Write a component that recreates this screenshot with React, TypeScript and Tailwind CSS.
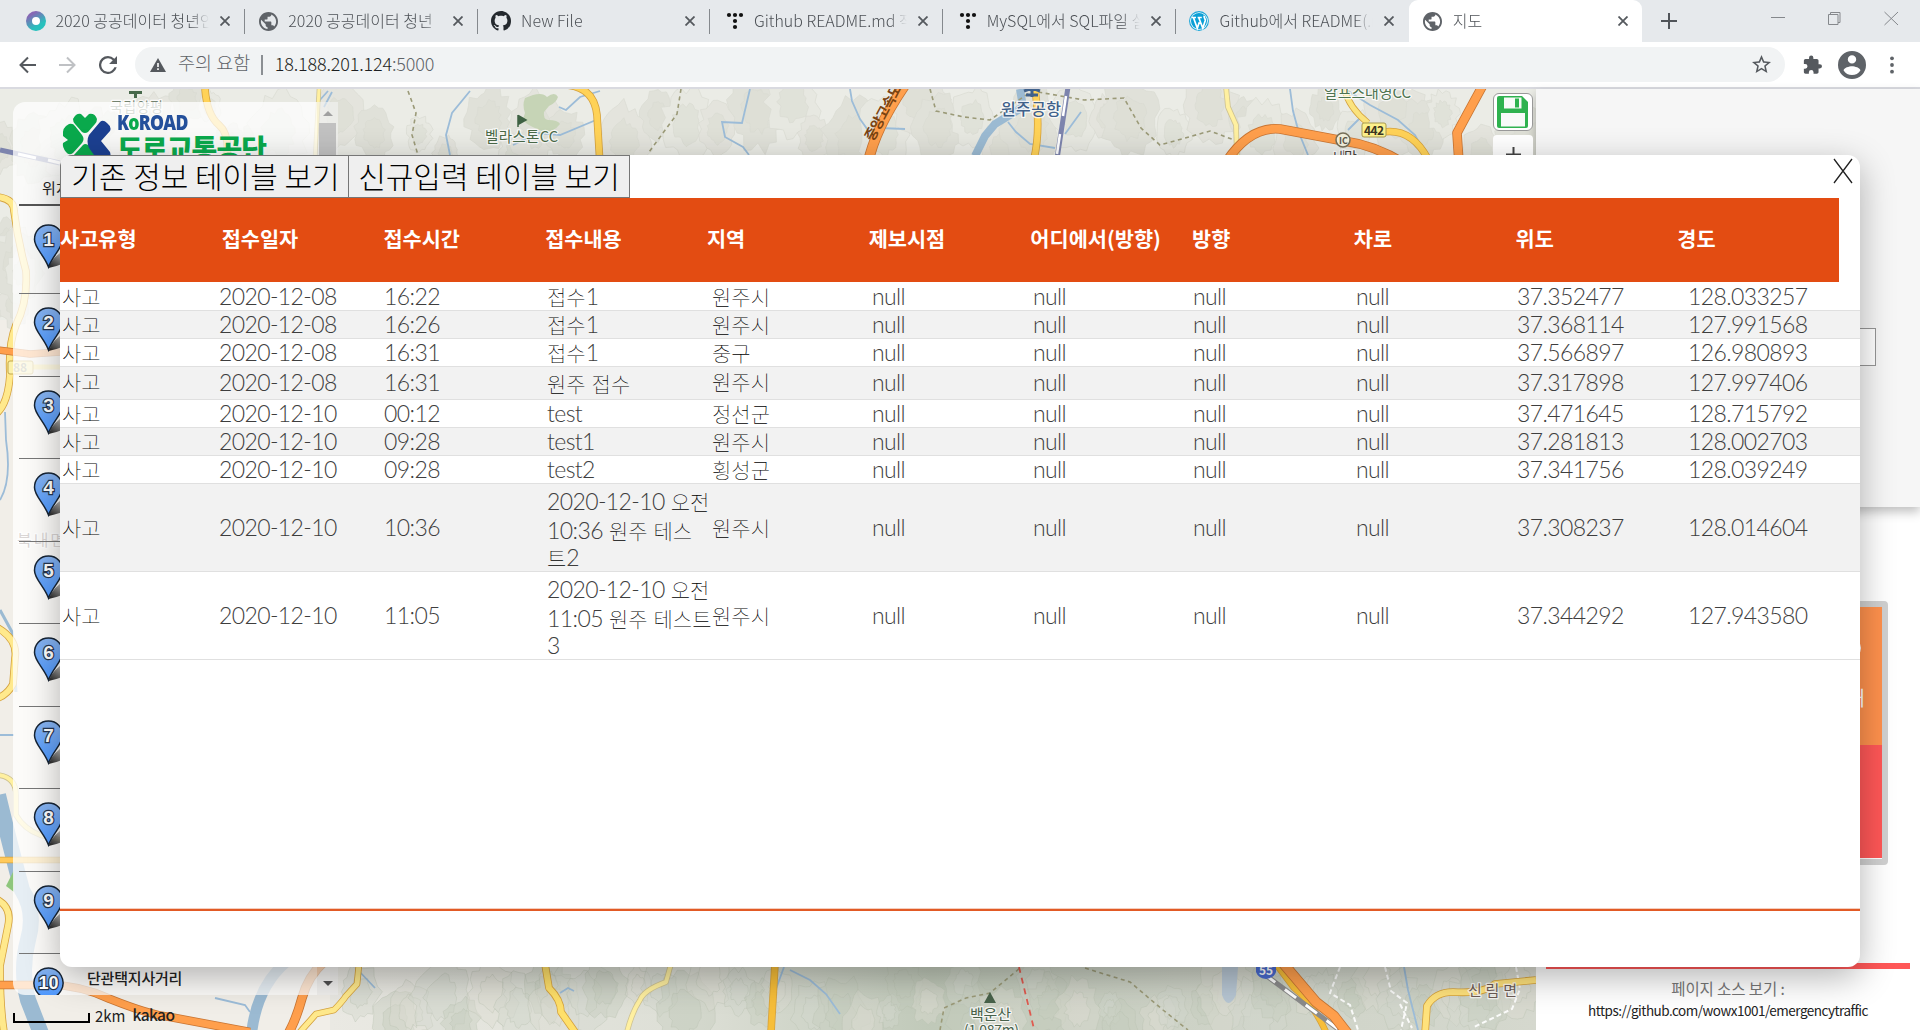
import { Fragment, type ReactNode } from "react";

const tabs = [
  { title: "2020 공공데이터 청년인턴", icon: "ring" },
  { title: "2020 공공데이터 청년", icon: "globe" },
  { title: "New File", icon: "github" },
  { title: "Github README.md 작성", icon: "dots" },
  { title: "MySQL에서 SQL파일 실행", icon: "dots" },
  { title: "Github에서 README(.md)", icon: "wordpress" },
];

const headers = ["사고유형", "접수일자", "접수시간", "접수내용", "지역", "제보시점", "어디에서(방향)", "방향", "차로", "위도", "경도"];

type Row = { date: string; time: string; note: string[]; area: string; lat: string; lng: string; size: "s" | "m" | "l" };

const rows: Row[] = [
  { date: "2020-12-08", time: "16:22", note: ["접수1"], area: "원주시", lat: "37.352477", lng: "128.033257", size: "s" },
  { date: "2020-12-08", time: "16:26", note: ["접수1"], area: "원주시", lat: "37.368114", lng: "127.991568", size: "s" },
  { date: "2020-12-08", time: "16:31", note: ["접수1"], area: "중구", lat: "37.566897", lng: "126.980893", size: "s" },
  { date: "2020-12-08", time: "16:31", note: ["원주 접수"], area: "원주시", lat: "37.317898", lng: "127.997406", size: "m" },
  { date: "2020-12-10", time: "00:12", note: ["test"], area: "정선군", lat: "37.471645", lng: "128.715792", size: "s" },
  { date: "2020-12-10", time: "09:28", note: ["test1"], area: "원주시", lat: "37.281813", lng: "128.002703", size: "s" },
  { date: "2020-12-10", time: "09:28", note: ["test2"], area: "횡성군", lat: "37.341756", lng: "128.039249", size: "s" },
  { date: "2020-12-10", time: "10:36", note: ["2020-12-10 오전", "10:36 원주 테스", "트2"], area: "원주시", lat: "37.308237", lng: "128.014604", size: "l" },
  { date: "2020-12-10", time: "11:05", note: ["2020-12-10 오전", "11:05 원주 테스트", "3"], area: "원주시", lat: "37.344292", lng: "127.943580", size: "l" },
];

const rowHeight = { s: "h-[28px]", m: "h-[33px]", l: "h-[88px]" };
const notePadding = { s: "", m: "pt-[4px]", l: "pt-[4px]" };

/* Latin runs are set a little larger than the Hangul beside them. */
function Mixed({ children }: { children: string }) {
  const parts = children.split(/([\x21-\x7e]+)/);
  return (
    <>
      {parts.map((p, i) =>
        i % 2 ? (
          <span key={i} className="text-[23px] font-light tracking-[-0.6px] text-[#3e3e3e]">{p}</span>
        ) : (
          <Fragment key={i}>{p}</Fragment>
        ),
      )}
    </>
  );
}

function Globe() {
  return (
    <svg className="h-[19px] w-[19px]" viewBox="2 2 20 20" fill="#5f6368">
      <path d="M12 2C6.48 2 2 6.48 2 12s4.48 10 10 10 10-4.48 10-10S17.52 2 12 2zm-1 17.93c-3.95-.49-7-3.85-7-7.93 0-.62.08-1.21.21-1.79L9 15v1c0 1.1.9 2 2 2v1.93zm6.9-2.54c-.26-.81-1-1.39-1.9-1.39h-1v-3c0-.55-.45-1-1-1H8v-2h2c.55 0 1-.45 1-1V7h2c1.1 0 2-.9 2-2v-.41c2.93 1.19 5 4.06 5 7.41 0 2.08-.8 3.97-2.1 5.39z" />
    </svg>
  );
}

function TabIcon({ kind }: { kind: string }) {
  if (kind === "globe") return <Globe />;
  if (kind === "ring")
    return (
      <svg className="h-[20px] w-[20px]" viewBox="0 0 20 20">
        <defs>
          <linearGradient id="ring" x1="0" y1="0" x2="0.6" y2="1">
            <stop offset="0.1" stopColor="#8668b5" />
            <stop offset="0.9" stopColor="#27c0bd" />
          </linearGradient>
        </defs>
        <circle cx="10" cy="10" r="7" fill="#fff" stroke="url(#ring)" strokeWidth="6" />
      </svg>
    );
  if (kind === "github")
    return (
      <svg className="h-[20px] w-[20px]" viewBox="0 0 16 16" fill="#24292e">
        <path d="M8 0C3.58 0 0 3.58 0 8c0 3.54 2.29 6.53 5.47 7.59.4.07.55-.17.55-.38 0-.19-.01-.82-.01-1.49-2.01.37-2.53-.49-2.69-.94-.09-.23-.48-.94-.82-1.13-.28-.15-.68-.52-.01-.53.63-.01 1.08.58 1.23.82.72 1.21 1.87.87 2.33.66.07-.52.28-.87.51-1.07-1.78-.2-3.64-.89-3.64-3.95 0-.87.31-1.59.82-2.15-.08-.2-.36-1.02.08-2.12 0 0 .67-.21 2.2.82.64-.18 1.32-.27 2-.27s1.36.09 2 .27c1.53-1.04 2.2-.82 2.2-.82.44 1.1.16 1.92.08 2.12.51.56.82 1.27.82 2.15 0 3.07-1.87 3.75-3.65 3.95.29.25.54.73.54 1.48 0 1.07-.01 1.93-.01 2.2 0 .21.15.46.55.38A8.01 8.01 0 0 0 16 8c0-4.42-3.58-8-8-8z" />
      </svg>
    );
  if (kind === "dots")
    return (
      <svg className="h-[20px] w-[20px]" viewBox="0 0 20 20" fill="#111">
        {[[5, 4], [11, 4], [17, 4], [11, 10], [11, 16]].map(([x, y]) => (
          <circle key={`${x}-${y}`} cx={x} cy={y} r="2.1" />
        ))}
      </svg>
    );
  return (
    <svg className="h-[20px] w-[20px]" viewBox="0 0 20 20">
      <circle cx="10" cy="10" r="9.4" fill="#fff" stroke="#1aa5d8" strokeWidth="1.1" />
      <circle cx="10" cy="10" r="8" fill="#0a9fd6" />
      <path d="M3 6.5h4M4.5 6.7l3.8 10.5 2-6M8.6 6.5h4.2M9.8 6.7l4 10.5 2.4-7.5c.5-2-1.7-3-1-5" fill="none" stroke="#fff" strokeWidth="1.7" />
    </svg>
  );
}

function CloseGlyph() {
  return (
    <svg className="h-[10px] w-[10px]" viewBox="0 0 10 10" stroke="#55595e" strokeWidth="1.8">
      <path d="M0.5 0.5l9 9M9.5 0.5l-9 9" />
    </svg>
  );
}

function TabBody({ icon, title }: { icon: ReactNode; title: string }) {
  return (
    <>
      <span className="flex w-[20px] shrink-0 justify-center">{icon}</span>
      <span className="ml-[10px] h-[24px] w-[154px] overflow-hidden whitespace-nowrap text-[16px] font-light leading-[22px] text-[#4d5156] [mask-image:linear-gradient(to_right,#000_88%,transparent)]">
        {title}
      </span>
      <span className="ml-[11px]"><CloseGlyph /></span>
    </>
  );
}

function BrowserChrome() {
  return (
    <header className="flex h-[89px] flex-col border-b-2 border-[#d9dae0] bg-white">
      <div className="flex h-[42px] items-stretch bg-[#e6e9ec] pl-[12px]">
        {tabs.map((t, i) => (
          <div key={i} className="flex w-[232.8px] items-center pl-[13.5px]">
            <TabBody icon={<TabIcon kind={t.icon} />} title={t.title} />
            {i < 5 && <span className="ml-[14px] h-[25px] w-px bg-[#85898d]" />}
          </div>
        ))}
        <div className="flex w-[233px] items-center rounded-t-[9px] bg-white pl-[14px]">
          <TabBody icon={<Globe />} title="지도" />
        </div>
        <svg className="ml-[19px] mt-[13px] h-[16px] w-[16px]" viewBox="0 0 16 16" stroke="#505459" strokeWidth="2"><path d="M8 0v16M0 8h16" /></svg>
        <svg className="ml-[94px] mt-[10px] h-[16px] w-[128px]" viewBox="0 0 128 16" fill="none" stroke="#85888c" strokeWidth="1">
          <path d="M0 7.5h14M57.5 4.5h9.5v10h-9.5zM59.5 4.5v-2h9.5v10h-2M113.5 2l13.5 13M127 2l-13.5 13" />
        </svg>
      </div>
      <div className="flex h-[45px] items-center">
        <svg className="ml-[19px] h-[18px] w-[17px]" viewBox="0 0 17 18" fill="none" stroke="#55595e" strokeWidth="2"><path d="M17 9H2M9 1.5L1.5 9 9 16.5" /></svg>
        <svg className="ml-[23px] h-[18px] w-[17px]" viewBox="0 0 17 18" fill="none" stroke="#bfc1c4" strokeWidth="2"><path d="M0 9h15M8 1.5L15.5 9 8 16.5" /></svg>
        <svg className="ml-[23px] h-[18px] w-[18px]" viewBox="4 4 16 16" fill="#55595e"><path d="M17.65 6.35A7.96 7.96 0 0 0 12 4a8 8 0 1 0 7.73 10h-2.08A6 6 0 1 1 12 6c1.66 0 3.14.69 4.22 1.78L13 11h7V4z" /></svg>
        <div className="ml-[18px] flex h-[35px] w-[1650px] items-center rounded-full bg-[#f1f3f4] pl-[15px] pr-[14px] text-[18px] font-light">
          <svg className="h-[14px] w-[16px]" viewBox="0 0 16 14" fill="#55595e"><path d="M8 0l8 14H0z" /><path d="M7.2 5h1.6v4H7.2zM7.2 10.3h1.6v1.6H7.2z" fill="#fff" /></svg>
          <span className="-mt-[3px] ml-[12px] text-[18.5px] text-[#5f6368]">주의 요함</span>
          <span className="ml-[11px] h-[20px] w-[1.5px] bg-[#8b8f93]" />
          <span className="-mt-[2px] ml-[12px] text-[18px] tracking-[-0.15px] text-[#1d1f22]">18.188.201.124<span className="text-[#5f6368]">:5000</span></span>
          <svg className="ml-auto h-[19px] w-[19px]" viewBox="2 2 20 20" fill="#55595e"><path d="M22 9.24l-7.19-.62L12 2 9.19 8.63 2 9.24l5.46 4.73L5.82 21 12 17.27 18.18 21l-1.63-7.03L22 9.24zM12 15.4l-3.76 2.27 1-4.28-3.32-2.88 4.38-.38L12 6.1l1.71 4.04 4.38.38-3.32 2.88 1 4.28L12 15.4z" /></svg>
        </div>
        <svg className="ml-[18px] h-[20px] w-[19px]" viewBox="1 1 22 22" fill="#55595e"><path d="M20.5 11H19V7c0-1.1-.9-2-2-2h-4V3.5a2.5 2.5 0 0 0-5 0V5H4c-1.1 0-1.99.9-1.99 2v3.8H3.5a2.7 2.7 0 0 1 0 5.4H2V20c0 1.1.9 2 2 2h3.8v-1.5a2.7 2.7 0 0 1 5.4 0V22H17c1.1 0 2-.9 2-2v-4h1.5a2.5 2.5 0 0 0 0-5z" /></svg>
        <svg className="ml-[16px] h-[28px] w-[28px]" viewBox="2 2 20 20" fill="#5f6368"><path d="M12 2a10 10 0 1 0 0 20 10 10 0 0 0 0-20zm0 3a3 3 0 1 1 0 6 3 3 0 0 1 0-6zm0 14.2a7.2 7.2 0 0 1-6-3.22c.03-1.99 4-3.08 6-3.08s5.97 1.09 6 3.08a7.2 7.2 0 0 1-6 3.22z" /></svg>
        <svg className="ml-[24px] h-[18px] w-[4px]" viewBox="0 0 4 18" fill="#5f6368"><circle cx="2" cy="2.3" r="1.9" /><circle cx="2" cy="9" r="1.9" /><circle cx="2" cy="15.7" r="1.9" /></svg>
      </div>
    </header>
  );
}

/* Irregular relief contours, seeded so every render is identical. */
function reliefPatches(y0: number, y1: number, count: number, seed: number, x0: number, x1: number) {
  let s = seed;
  const rnd = () => ((s = (s * 16807) % 2147483647) / 2147483647);
  return Array.from({ length: count }, (_, i) => {
    const cx = x0 + (x1 - x0) * ((i + rnd() * 0.8) / count);
    const cy = y0 + (y1 - y0) * rnd();
    const r = 12 + rnd() * 20;
    const shape = Array.from({ length: 28 }, () => 0.76 + rnd() * 0.34);
    const ring = (k: number) =>
      shape
        .map((q, j) => {
          const a = (j / shape.length) * Math.PI * 2;
          return `${(cx + Math.cos(a) * q * r * k).toFixed(1)},${(cy + Math.sin(a) * q * r * k * 1.4).toFixed(1)}`;
        })
        .join(" ");
    return { outer: ring(1), inner: ring(0.55), tone: i % 3 };
  });
}

const topRelief = [...reliefPatches(92, 150, 12, 15, 0, 300), ...reliefPatches(95, 155, 38, 71, 340, 1535), ...reliefPatches(210, 310, 6, 5, 0, 26)];
const bottomRelief = reliefPatches(975, 1028, 48, 1234, 360, 1535);
const tones = ["#e4e4dd", "#e0e1d9", "#e7e8e1"];
const darkTones = ["#d3d6cc", "#c6cdbf", "#dbdcd3"];

function Road({ d, w = 6, color = "#ffd257", edge = "#d5a23e" }: { d: string; w?: number; color?: string; edge?: string }) {
  return (
    <g fill="none" strokeLinejoin="round">
      <path d={d} stroke={edge} strokeWidth={w + 1.6} />
      <path d={d} stroke={color} strokeWidth={w} />
    </g>
  );
}

function MapCanvas() {
  const orange = { color: "#ff9f4c", edge: "#c87533" };
  const pale = { color: "#fff0a0", edge: "#cfc392" };
  return (
    <svg className="block h-[941px] w-[1536px] font-['Noto_Sans_CJK_KR',sans-serif]" viewBox="0 89 1536 941">
      <defs>
        <linearGradient id="mount" x1="0" x2="1">
          <stop offset="0" stopColor="#eae9e3" />
          <stop offset="0.3" stopColor="#dddfd6" />
          <stop offset="0.5" stopColor="#c0c9b9" />
          <stop offset="0.7" stopColor="#cdd2c6" />
          <stop offset="1" stopColor="#d5d8ce" />
        </linearGradient>
      </defs>
      <rect y="89" width="1536" height="941" fill="#ebece6" />
      <rect y="320" width="62" height="710" fill="#f1eee8" />
      <rect y="960" width="330" height="70" fill="#f1eee8" />
      <rect x="330" y="960" width="1206" height="70" fill="url(#mount)" />
      {topRelief.map((p, i) => (
        <g key={i} fill={tones[p.tone]} stroke="#dadbd2" strokeWidth="0.7" strokeLinejoin="round">
          <polygon points={p.outer} />
          <polygon points={p.inner} fill="#dcddd4" fillOpacity="0.6" />
        </g>
      ))}
      {bottomRelief.map((p, i) => (
        <g key={i} fill={darkTones[p.tone]} fillOpacity="0.4" stroke="#b8c0b0" strokeOpacity="0.5" strokeWidth="0.7" strokeLinejoin="round">
          <polygon points={p.outer} />
          <polygon points={p.inner} />
        </g>
      ))}

      <path d="M525 98l8-3q10-3 14 2 8-6 11 0-2 6-9 9l-5 6q-1 7 4 8 10 0 12 4-6 8-16 8-10-4-15-7-8-4-4-12-3-8 0-15z" fill="#c6d4b6" />
      <g fill="none" stroke="#9cbcd8" strokeWidth="1.8">
        <path d="M600 91l-20 6-14 13-7-3M470 91l-18 22-6 22 4 20M596 120l-36 15-22-2-25 12M750 89l-8 34-20-1 3 15 18 10 6 8M850 89l2 12 8 18 10 14M880 128l25 1M1008 122l8 10 14 12 25 4M1081 112l-16 22M1290 89l3 22 6 22 9 22M1345 89l25 16 28 15 17 15 12 22M1348 130l14-14M328 91l-9 10M332 92l-8 15" />
        <path d="M0 500q12-20 6-60l-1-28M0 735h14M358 970l17 18M215 998l30 7 5 7M784 967l-8 22M790 970l20 10 16 14 14 20M560 993l8-5 6 3M1404 967l4 23 10 40" />
      </g>
      <g fill="none" stroke="#9bbad2">
        <path d="M1020 89l3 18-28 17-10 12-10 20" strokeWidth="8" />
        <path d="M286 962q-28 24-34 68" strokeWidth="11" />
        <path d="M-2 795q12 50 24 95 14 22 6 50-8 30 0 60l14 36" strokeWidth="16" />
        <path d="M0 610l12 22 4 60" strokeWidth="3" />
      </g>
      <path d="M1222 967h16l-2 28q-8 16-14 0z" fill="#b7c6d3" />
      <path d="M6 886l8-16v22z" fill="#8ec67c" />
      <g fill="none" stroke="#9b9a78" strokeWidth="1.6" strokeDasharray="4 3.5">
        <path d="M408 91l8 22-4 22 6 20M681 89l-4 25-28 38M930 89l6 22 28 6 26 3 42-29 52 9 40-2 17 30 19 17 50-14 32 12" />
        <path d="M940 1030l4-22 22-10 24-5 30-25M1085 968l45 14 33 28 25 20" />
      </g>
      <path d="M1019 967l15 62" stroke="#e05a4f" strokeWidth="1.8" strokeDasharray="6 5" />
      <g fill="none" stroke="#fff" strokeOpacity="0.9" strokeWidth="2" strokeDasharray="5 3">
        <path d="M1340 967l-10 26 20 12 8 25M1385 967l6 24 16 12-6 27M1516 967l4 22-8 20-38 18M1400 1004l12 24" />
      </g>

      <Road d="M205 89q2 26 14 36t7 40" />
      <Road d="M319 89l-4 70" w={3} {...pale} />
      <Road d="M566 85q28 2 31 30l3 50" w={6} />
      <Road d="M905 85q-30 44-37 78" w={9} {...orange} />
      <Road d="M1035 89q6 40-1 70" w={6} />
      <Road d="M1226 87l2 20 8 18 1 34" w={4} {...pale} />
      <Road d="M1344 87q4 20 24 36" w={5} color="#fbe37d" />
      <Road d="M1378 133q32-8 50 26" w={6} />
      <Road d="M1226 162q24-36 54-33l64 12q30 4 60 22" w={8} {...orange} />
      <Road d="M1483 85q-24 44-26 48l2 30" w={8} {...orange} />
      <path d="M0 150l60 13" stroke="#7d84ad" strokeWidth="5" />
      <path d="M18 154l18 4M48 160l12 3" stroke="#fff" strokeWidth="3" />
      <path d="M1068 87l-11 72" stroke="#7d84ad" strokeWidth="5" />
      <path d="M1066 96l-3 20M1060 134l-3 20" stroke="#fff" strokeWidth="2.5" />

      <Road d="M-2 197q16 2 16 14 4 30 12 60 2 30-10 54-8 20-6 50-2 28-13 38" w={6} color="#ffe98c" />
      <Road d="M-2 350l32 4 30-2" w={6} {...orange} />
      <path d="M18 367h42l20 8" stroke="#ffe98c" strokeWidth="5" fill="none" />
      <Road d="M-2 628q20 12 17 30l-2 26q-5 10-15 14" w={6} color="#ffe98c" />
      <Road d="M-2 775q18 2 18 20v20q8 14 24 20l24 6" w={4} {...pale} />
      <Road d="M-2 860h62" w={5} color="#ffc95a" />
      <Road d="M-2 900q14 8 10 26l-8 40q0 40 4 66" w={6} color="#ffe98c" />
      <rect x="8" y="361" width="25" height="13" rx="2" fill="#fbf0a9" stroke="#c1a64d" />
      <text x="13" y="372" fontSize="12" fontWeight="700" fill="#9c9a80">88</text>

      <Road d="M-2 985h52q30 0 60 14 40 16 60 18l80 15" w={7} {...orange} />
      <Road d="M288 1034q8-14 14-36t22-36" w={8} {...orange} />
      <Road d="M300 1032l16-18 18-4q8-8 12-14l11-12 2-20" w={5} color="#ffe98c" />
      <Road d="M545 964l4 24q12 12 12 24l14 20" w={6} color="#ffe06a" />
      <Road d="M671 964l-5 18q-22 8-26 18-8 12-13 32" w={4} {...pale} />
      <Road d="M775 964l-4 68" w={6} color="#f7be39" />
      <Road d="M1276 964l18 24q18 14 32 44" w={5} color="#f7be39" />
      <path d="M1264 974l78 58" stroke="#8b8b8b" strokeWidth="5" />
      <path d="M1264 974l78 58" stroke="#fff" strokeWidth="3" strokeDasharray="14 12" />
      <Road d="M1282 962l34 40 18 14 14 18" w={9} {...orange} />
      <Road d="M1425 1034l2-28q8-14 26-14 30 2 42-8l41-4" w={6} color="#ffe27c" />

      <path d="M1256 962h20v10q-2 6-10 7-8-1-10-7z" fill="#4a6bd0" />
      <text x="1259" y="975" fontSize="12" fontWeight="700" fill="#fff">55</text>
      <path d="M129 91h13v3h-5v4h-3v-4h-5z" fill="#48694b" />
      <path d="M518 115v12M519 116l7 4-7 4z" fill="#3f6143" stroke="#3f6143" strokeWidth="1.5" />
      <path d="M1026 95h12M1032 89v8M1024 91l8-3 8 3" stroke="#40618a" strokeWidth="3" fill="none" />
      <path d="M990 992l6 11h-12z" fill="#48624a" />
      <rect x="1362" y="123" width="24" height="14" rx="2" fill="#fdf08c" stroke="#a89a50" />
      <text x="1364" y="135" fontSize="12" fontWeight="700" fill="#3c3522" textLength="20">442</text>
      <circle cx="1343" cy="140" r="7" fill="#f3f0dc" stroke="#776f58" strokeWidth="1.5" />
      <text x="1339" y="144" fontSize="9" fontWeight="700" fill="#5d5546">IC</text>
      <g paintOrder="stroke" stroke="#fff" strokeWidth="2.5" strokeLinejoin="round" strokeOpacity="0.8">
        <text x="110" y="112" fontSize="14" fill="#73836f" textLength="53">국립양평</text>
        <text x="485" y="142" fontSize="14.5" fill="#4b6a48" textLength="73">벨라스톤CC</text>
        <text x="1001" y="115" fontSize="16" fontWeight="500" fill="#40618a" textLength="60">원주공항</text>
        <text x="1324" y="98" fontSize="15" fill="#4e7350" textLength="87">알프스대영CC</text>
        <text x="1333" y="162" fontSize="14" fill="#4a443b" textLength="24">내막</text>
        <text x="970" y="1020" fontSize="15" fill="#48624a" textLength="41">백운산</text>
        <text x="964" y="1035" fontSize="14" fill="#48624a" textLength="55">(1,087m)</text>
        <text x="1468" y="996" fontSize="15" fill="#6e5d56" textLength="49">신림면</text>
        <text x="17" y="546" fontSize="16" fill="#6d5d5a" textLength="48">북내면</text>
      </g>
      <text x="873" y="142" fontSize="14" fontWeight="700" fill="#7a4311" transform="rotate(-62 873 142)" textLength="74">중앙고속도로</text>
    </svg>
  );
}

function Pin({ n }: { n: number }) {
  const round = n === 10;
  return (
    <svg className="ml-[14px] block h-[46px] w-[50px] shrink-0" viewBox="0 0 50 46">
      <defs>
        <linearGradient id={`pin${n}`} x1="0" y1="0" x2="0" y2="1">
          <stop offset="0" stopColor="#89b5f2" />
          <stop offset="1" stopColor="#4b97ff" />
        </linearGradient>
        <linearGradient id={`sh${n}`} x1="0" y1="1" x2="1" y2="0">
          <stop offset="0" stopColor="#000" stopOpacity="0.9" />
          <stop offset="0.8" stopColor="#000" stopOpacity="0" />
        </linearGradient>
      </defs>
      {!round && <path d="M15.5 44q4-12 18-19l10-2-4 10q-8 8-24 11z" fill={`url(#sh${n})`} />}
      <path
        d={round ? "M15.5 1a14.5 15 0 1 0 .01 0z" : "M15.5 1C7 1 1.5 7.5 1.5 15.5 1.5 24 11 31 15.5 43 20 31 29.5 24 29.5 15.5 29.5 7.5 24 1 15.5 1z"}
        fill={`url(#pin${n})`} stroke="#172536" strokeWidth="1.5"
      />
      <text x="15.5" y="22" textAnchor="middle" fontSize={round ? 18 : 19} fontWeight="700" fill="#fff" stroke="#26364f" strokeWidth="2.4" paintOrder="stroke" className="font-['Liberation_Sans',sans-serif]">{n}</text>
    </svg>
  );
}

function Sidebar() {
  return (
    <aside className="absolute left-[13px] top-[102px] flex h-[893px] w-[325px] overflow-hidden rounded-l-[12px]">
      <div className="w-[304px] bg-white/75 pl-[6px]">
        <div className="h-[104px] border-b-2 border-[#555]">
          <div className="flex h-[74px] pl-[42px] pt-[11px]">
            <svg className="h-[54px] w-[50px]" viewBox="0 0 50 54">
              <g fill="#0aa94c">
                <path d="M12 6q3-6 8-5l4 4 4-4q6-1 8 5 0 3-2 5l-7 8q-3 2-6 0l-7-8q-2-2-2-5z" />
                <path d="M8 11q4-1 6 2l7 9q3 4 0 8l-9 10q-4 3-7-1-4-5-3-9l5-3-5-4q-1-9 6-12z" />
                <path d="M22 32q2-2 5 0l9 11v11H12V43z" />
              </g>
              <path d="M39 9q3-3 7 1 5 4 3 8l-9 10 9 11q2 7-3 11-5 2-8-1L28 35q-3-7 0-13z" fill="#1c4091" />
            </svg>
            <div className="ml-[6px] flex flex-col whitespace-nowrap">
              <span className="origin-left scale-x-[0.84] text-[21px] font-extrabold leading-[19px] tracking-[-0.9px] text-[#24509b] font-['Open_Sans',sans-serif]">K<span className="text-[#0aa94c]">o</span>ROAD</span>
              <span className="mt-px text-[28px] font-black leading-[30px] tracking-[-0.9px] text-[#0aa94c]">도로교통공단</span>
            </div>
          </div>
          <p className="pl-[23px] text-[15px] leading-[24px] text-[#222]">위치</p>
        </div>
        {Array.from({ length: 10 }, (_, i) => (
          <div key={i} className={`flex items-start ${i === 9 ? "pt-[13px]" : i === 0 ? "h-[88px] border-b border-[#777] pt-[18px]" : "h-[82.5px] border-b border-[#777] pt-[13px]"}`}>
            <Pin n={i + 1} />
            {i === 9 && <span className="-mt-px ml-[4px] whitespace-nowrap text-[15px] font-medium leading-[24px] tracking-[-0.2px] text-[#222]">단관택지사거리</span>}
          </div>
        ))}
      </div>
      <div className="flex w-[21px] flex-col items-center bg-[#f4f4f4]/60">
        <svg className="mt-[9px] h-[5px] w-[10px] shrink-0" viewBox="0 0 10 5" fill="#a0a0a0"><path d="M0 5l5-5 5 5z" /></svg>
        <span className="mt-[7px] h-[300px] w-[17px] bg-[#c1c1c1]" />
        <svg className="mb-[9px] mt-auto h-[5px] w-[10px] shrink-0" viewBox="0 0 10 5" fill="#505050"><path d="M0 0h10L5 5z" /></svg>
      </div>
    </aside>
  );
}

function RightPanel() {
  return (
    <section className="flex h-[941px] flex-1 flex-col bg-white">
      <div className="flex h-[418px] shrink-0 flex-col items-end bg-[#f6f6f6] pr-[44px] pt-[239px] shadow-[0_5px_10px_rgba(0,0,0,0.25)]">
        <div className="h-[38px] w-[280px] border border-[#969696] bg-white" />
      </div>
      <div className="ml-[120px] mt-[94px] h-[264px] w-[232px] shrink-0 rounded-[4px] border-6 border-[#d0d0d0] text-white">
        <div className="flex h-[138px] flex-col items-end bg-[#ff914d] pr-[17px] pt-[31px] text-[20px] leading-[24px]">
          <span className="mr-[4px] h-[20px] w-[20px] rounded-full border-2 border-white" />
          <span className="mt-[28px]">안내</span>
        </div>
        <div className="h-[113px] bg-[#ff5757]" />
      </div>
      <div className="ml-[10px] mt-[98px] h-[6px] w-[364px] shrink-0 bg-[#ff5757]" />
      <p className="pt-[7px] text-center text-[15.5px] leading-[24px] tracking-[-0.1px] text-[#777]">페이지 소스 보기 :</p>
      <p className="text-center text-[13.5px] leading-[20px] tracking-[-0.5px] text-[#222]">https://github.com/wowx1001/emergencytraffic</p>
    </section>
  );
}

function TableDialog() {
  return (
    <div role="dialog" className="absolute left-[60px] top-[155px] flex h-[812px] w-[1800px] flex-col overflow-hidden rounded-[12px] bg-white shadow-[0_10px_35px_rgba(0,0,0,0.3)]">
      <div className="flex h-[43px] shrink-0 text-[30px] font-light leading-[36px] text-black">
        <button className="w-[289px] whitespace-nowrap border border-[#767676] bg-[#efefef] pb-[3px] pl-[2px]">기존 정보 테이블 보기</button>
        <button className="-ml-px w-[282px] whitespace-nowrap border border-[#767676] bg-[#efefef] pb-[3px]">신규입력 테이블 보기</button>
        <svg className="ml-auto mr-[7px] mt-[3px] h-[26px] w-[20px]" viewBox="0 0 20 26" stroke="#222" strokeWidth="1.3"><path d="M1 1l18 24M19 1L1 25" /></svg>
      </div>
      <div className="grid h-[84px] w-[1779px] shrink-0 grid-cols-11 items-center bg-[#e34c12] pb-[3px] text-[20.8px] font-bold text-white">
        {headers.map((h) => <span key={h} className="whitespace-nowrap">{h}</span>)}
      </div>
      <div className="h-[626px] shrink-0 pt-px">
        {rows.map((r, i) => (
          <div
            key={i}
            className={`grid grid-cols-[157px_165px_163px_165px_160px_161px_160px_163px_161px_171px_1fr] items-center whitespace-nowrap border-b border-[#e0e0e0] pb-[4px] pl-[2px] font-['Lato','Noto_Sans_CJK_KR',sans-serif] text-[21px] font-thin leading-[26px] text-black ${rowHeight[r.size]} ${i % 2 ? "bg-[#f2f2f2]" : "bg-white"}`}
          >
            <span>사고</span>
            <span><Mixed>{r.date}</Mixed></span>
            <span><Mixed>{r.time}</Mixed></span>
            <span className={`flex flex-col ${notePadding[r.size]}`}>
              {r.note.map((n, k) => <span key={k} className={k === 1 ? "mt-[2px]" : ""}><Mixed>{n}</Mixed></span>)}
            </span>
            <span>{r.area}</span>
            {[0, 1, 2, 3].map((k) => <span key={k}><Mixed>null</Mixed></span>)}
            <span><Mixed>{r.lat}</Mixed></span>
            <span><Mixed>{r.lng}</Mixed></span>
          </div>
        ))}
      </div>
      <div className="h-[3px] shrink-0 border-b-2 border-t border-b-[#e25a25] border-t-[#f5cdbd]" />
    </div>
  );
}

export default function App() {
  return (
    <div className="relative h-[1030px] w-[1920px] overflow-hidden bg-white font-['Noto_Sans_CJK_KR',sans-serif]">
      <BrowserChrome />
      <main className="flex">
        <MapCanvas />
        <RightPanel />
      </main>
      <Sidebar />
      <div className="absolute left-[1493px] top-[93px] flex flex-col gap-[4px]">
        <div className="flex h-[38px] w-[40px] items-center justify-center rounded-[6px] border border-[#999] bg-white">
          <svg className="h-[32px] w-[32px]" viewBox="0 0 32 32">
            <path d="M2 0h23l6 6v24q0 2-2 2H2q-2 0-2-2V2q0-2 2-2z" fill="#2fb24f" />
            <path d="M7 1.5h17.5v11H7zM4 17h24v13.5H4z" fill="#f8faf8" />
            <path d="M18 2.5h4v9h-4z" fill="#2fb24f" />
          </svg>
        </div>
        <div className="h-[60px] w-[40px] rounded-[4px] bg-white">
          <svg className="mx-auto mt-[12px] h-[15px] w-[15px]" viewBox="0 0 15 15" stroke="#444" strokeWidth="2"><path d="M7.5 0v15M0 7.5h15" /></svg>
        </div>
      </div>
      <div className="absolute left-[13px] top-[1003px] flex items-end text-[15px] leading-[22px] text-[#222]">
        <span className="mb-[4px] h-[10px] w-[77px] border-2 border-t-0 border-black" />
        <span className="ml-[5px]">2km</span>
        <span className="mb-[2px] ml-[7px] text-[15.5px] font-medium tracking-[-0.6px]">kakao</span>
      </div>
      <TableDialog />
    </div>
  );
}
